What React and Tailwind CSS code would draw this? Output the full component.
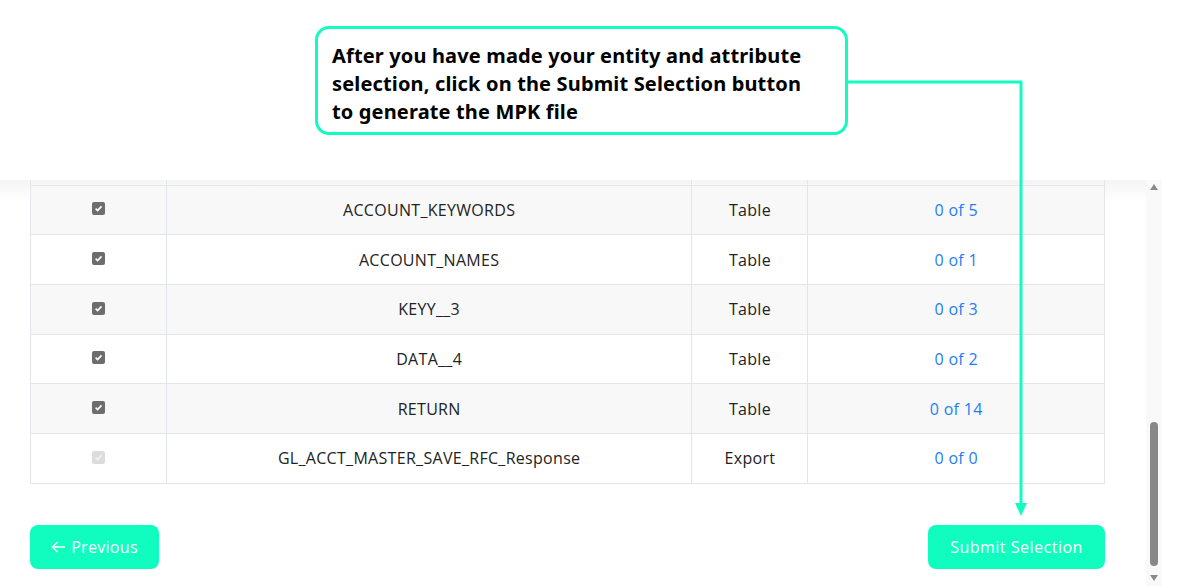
import React from 'react';

const rows = [
  { name: 'ACCOUNT_KEYWORDS', type: 'Table', count: '0 of 5' },
  { name: 'ACCOUNT_NAMES', type: 'Table', count: '0 of 1' },
  { name: 'KEYY__3', type: 'Table', count: '0 of 3' },
  { name: 'DATA__4', type: 'Table', count: '0 of 2' },
  { name: 'RETURN', type: 'Table', count: '0 of 14' },
  { name: 'GL_ACCT_MASTER_SAVE_RFC_Response', type: 'Export', count: '0 of 0', disabled: true },
];

const Check = ({ disabled }) => (
  <span
    className={`flex w-[13px] h-[13px] rounded-[2px] items-center justify-center ${
      disabled ? 'bg-[#dcdcdc]' : 'bg-[#6d6d6d]'
    }`}
  >
    <svg width="9" height="9" viewBox="0 0 10 10">
      <path d="M1.8 5.2 L4 7.3 L8.3 2.6" fill="none" stroke={disabled ? '#f2f2f2' : '#fff'} strokeWidth="1.8" />
    </svg>
  </span>
);

export default function App() {
  return (
    <div className="relative w-[1177px] h-[586px] overflow-hidden bg-white font-['Open_Sans',sans-serif] text-[#222]">
      {/* top white area with callout */}
      <div className="h-[180px]" />

      <div className="flex h-[406px]">
        <div className="relative flex-1 pl-[30px] pr-[41px]">
          <div className="absolute top-0 left-0 right-0 h-[22px] bg-gradient-to-b from-[#f4f4f4] to-transparent" />
          <table className="relative w-[1075px] border-collapse text-[16px] tracking-[0.3px]">
            <colgroup>
              <col className="w-[136px]" />
              <col className="w-[526px]" />
              <col className="w-[116px]" />
              <col className="w-[297px]" />
            </colgroup>
            <tbody>
              <tr className="h-[5px]">
                <td className="border-x border-[#e2e5e9] p-0" />
                <td className="border-x border-[#e2e5e9] p-0" />
                <td className="border-x border-[#e2e5e9] p-0" />
                <td className="border-x border-[#e2e5e9] p-0" />
              </tr>
              {rows.map((r, i) => (
                <tr key={r.name} className={`h-[49.7px] ${i % 2 === 0 ? 'bg-[#f8f8f8]' : 'bg-white'}`}>
                  <td className="border border-[#e2e5e9] align-middle p-0">
                    <div className="flex justify-center pb-[2px]">
                      <Check disabled={r.disabled} />
                    </div>
                  </td>
                  <td className="border border-[#e2e5e9] text-center align-middle p-0">{r.name}</td>
                  <td className="border border-[#e2e5e9] text-center align-middle p-0">{r.type}</td>
                  <td className="border border-[#e2e5e9] text-center align-middle p-0 text-[#1f7ef3]">{r.count}</td>
                </tr>
              ))}
            </tbody>
          </table>

          <div className="flex justify-between mt-[41px]">
            <button className="h-[44px] w-[129px] rounded-[8px] bg-[#10fdbf] text-white text-[16px] tracking-[0.3px] flex items-center justify-center gap-[5px]">
              <svg width="15" height="12" viewBox="0 0 15 12">
                <path d="M14 6 H1.5 M6.5 1 L1.5 6 L6.5 11" fill="none" stroke="#fff" strokeWidth="1.5" />
              </svg>
              <span>Previous</span>
            </button>
            <button className="h-[44px] w-[177px] rounded-[8px] bg-[#10fdbf] text-white text-[16px] tracking-[0.5px]">
              Submit Selection
            </button>
          </div>
        </div>

        {/* scrollbar */}
        <div className="w-[16px] bg-[#f9f9f9] flex flex-col items-center">
          <svg width="10" height="8" viewBox="0 0 10 8" className="mt-[3px]">
            <path d="M5 1 L9 7 L1 7 Z" fill="#8a8a8a" />
          </svg>
          <div className="flex-1" />
          <div className="w-[8px] h-[144px] rounded-full bg-[#888888] mb-[8px]" />
          <svg width="10" height="8" viewBox="0 0 10 8" className="mb-[4px]">
            <path d="M1 1 L9 1 L5 7 Z" fill="#8a8a8a" />
          </svg>
        </div>
        <div className="w-[15px]" />
      </div>

      {/* callout annotation */}
      <div className="absolute left-[315px] top-[26px] w-[533px] h-[109px] rounded-[14px] border-[3px] border-[#12fcc0] bg-white pl-[14px] pr-[24px] pt-[13px] font-['Noto_Sans',sans-serif] font-bold text-[20px] tracking-[0.15px] leading-[28px] text-black">
        After you have made your entity and attribute selection, click on the Submit Selection button to generate the MPK file
      </div>
      <svg className="absolute left-0 top-0 pointer-events-none" width="1177" height="586">
        <path d="M848 82 H1021 V508" fill="none" stroke="#12fcc0" strokeWidth="3" />
        <path d="M1015 503 L1027 503 L1021 516 Z" fill="#12fcc0" />
      </svg>
    </div>
  );
}
